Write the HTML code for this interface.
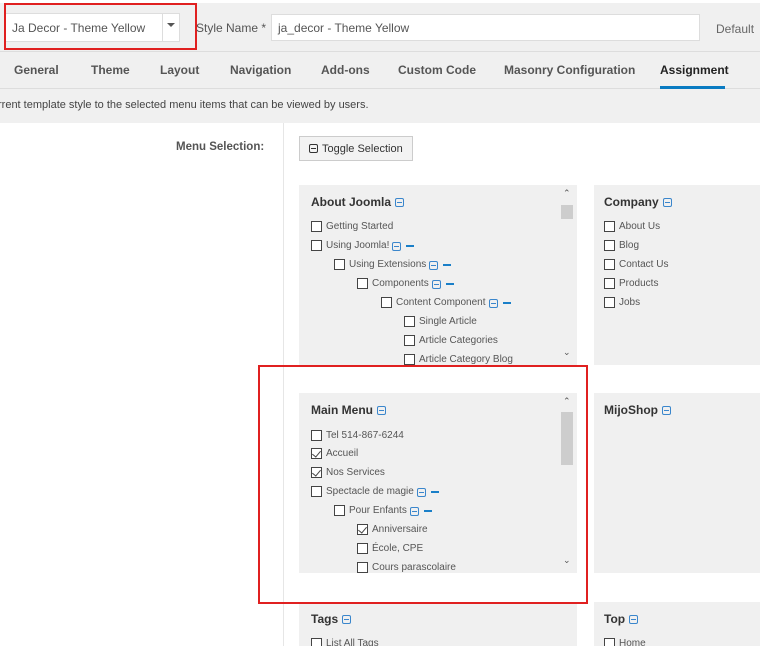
<!DOCTYPE html>
<html><head><meta charset="utf-8"><style>
*{margin:0;padding:0;box-sizing:border-box}
body{width:760px;height:646px;overflow:hidden;position:relative;background:#fff;font-family:"Liberation Sans",sans-serif;color:#333}
.a{position:absolute}
.hdr{left:0;top:3px;width:760px;height:120px;background:#f0f0f0}
.tab{position:absolute;top:63px;font-size:12px;font-weight:bold;color:#555}
.panel{position:absolute;background:#f0f0f0;overflow:hidden}
.h{position:absolute;font-size:12px;font-weight:bold;color:#333;left:12px}
.it{position:absolute;font-size:10px;color:#555;white-space:nowrap;height:12px;line-height:12px}
.cb{display:inline-block;width:11px;height:11px;border:1px solid #444;background:#fff;vertical-align:top;margin-right:4px;position:relative}
.cb.c::after{content:"";position:absolute;left:2px;top:0px;width:4px;height:7px;border:solid #444;border-width:0 1px 1px 0;transform:rotate(40deg)}
.ic{display:inline-block;width:9px;height:9px;border:1px solid #3a86cc;border-radius:2px;position:relative;vertical-align:top;margin:2px 0 0 3px}
.ic::after{content:"";position:absolute;left:1px;right:1px;top:3px;height:1px;background:#3a86cc}
.h .ic{margin-left:4px;margin-top:3px}
.ds{display:inline-block;width:8px;height:2px;background:#1a7fc8;vertical-align:top;margin:5px 0 0 5px}
.sb{position:absolute;right:0;top:0;width:19px;height:100%;background:#f0f0f0}
.sb .t{position:absolute;left:3px;width:12px;background:#cdcdcd}
.ar{position:absolute;left:5px;font-size:9px;color:#555}
</style></head><body>
<div class="a hdr"></div>
<div class="a" style="left:0;top:51px;width:760px;height:1px;background:#ddd"></div>
<div class="a" style="left:0;top:88px;width:760px;height:1px;background:#ddd"></div>
<div class="a" style="left:5px;top:13px;width:175px;height:29px;background:#fff;border:1px solid #ddd"></div>
<div class="a" style="left:162px;top:13px;width:1px;height:29px;background:#ddd"></div>
<div class="a" style="left:167px;top:23px;width:0;height:0;border-left:4px solid transparent;border-right:4px solid transparent;border-top:4px solid #555"></div>
<div class="a" style="left:12px;top:21px;font-size:12px;color:#555">Ja Decor - Theme Yellow</div>
<div class="a" style="left:4px;top:3px;width:193px;height:47px;border:2px solid #e02020"></div>
<div class="a" style="left:196px;top:21px;font-size:12px;color:#555">Style Name *</div>
<div class="a" style="left:271px;top:14px;width:429px;height:27px;background:#fff;border:1px solid #ddd"></div>
<div class="a" style="left:278px;top:21px;font-size:12px;color:#555">ja_decor - Theme Yellow</div>
<div class="a" style="left:716px;top:22px;font-size:12px;color:#666">Default</div>
<div class="tab" style="left:14px">General</div>
<div class="tab" style="left:91px">Theme</div>
<div class="tab" style="left:160px">Layout</div>
<div class="tab" style="left:230px">Navigation</div>
<div class="tab" style="left:321px">Add-ons</div>
<div class="tab" style="left:398px">Custom Code</div>
<div class="tab" style="left:504px">Masonry Configuration</div>
<div class="tab" style="left:660px;color:#222">Assignment</div>
<div class="a" style="left:660px;top:86px;width:65px;height:3px;background:#0a7bc2"></div>
<div class="a" style="left:-2px;top:99px;font-size:11px;color:#444;white-space:nowrap">rrent template style to the selected menu items that can be viewed by users.</div>
<div class="a" style="left:283px;top:123px;width:1px;height:523px;background:#e6e6e6"></div>
<div class="a" style="left:176px;top:141px;font-size:11.5px;font-weight:bold;color:#555">Menu Selection:</div>
<div class="a" style="left:299px;top:136px;width:114px;height:25px;background:#f3f3f3;border:1px solid #ccc;font-size:11px;color:#333;padding:6px 0 0 9px"><span class="ic k" style="border-color:#333;margin:1px 4px 0 0"></span>Toggle Selection</div>
<style>.ic.k::after{background:#333}</style>

<div class="panel" style="left:299px;top:185px;width:278px;height:180px">
 <div class="h" style="top:10px">About Joomla<span class="ic"></span></div>
 <div class="it" style="left:12px;top:36px"><span class="cb"></span>Getting Started</div>
 <div class="it" style="left:12px;top:55px"><span class="cb"></span>Using Joomla!<span class="ic"></span><span class="ds"></span></div>
 <div class="it" style="left:35px;top:74px"><span class="cb"></span>Using Extensions<span class="ic"></span><span class="ds"></span></div>
 <div class="it" style="left:58px;top:93px"><span class="cb"></span>Components<span class="ic"></span><span class="ds"></span></div>
 <div class="it" style="left:82px;top:112px"><span class="cb"></span>Content Component<span class="ic"></span><span class="ds"></span></div>
 <div class="it" style="left:105px;top:131px"><span class="cb"></span>Single Article</div>
 <div class="it" style="left:105px;top:150px"><span class="cb"></span>Article Categories</div>
 <div class="it" style="left:105px;top:169px"><span class="cb"></span>Article Category Blog</div>
 <div class="sb"><div class="ar" style="top:3px">&#8963;</div><div class="t" style="top:20px;height:14px"></div><div class="ar" style="top:162px">&#8964;</div></div>
</div>
<div class="panel" style="left:594px;top:185px;width:166px;height:180px">
 <div class="h" style="top:10px;left:10px">Company<span class="ic"></span></div>
 <div class="it" style="left:10px;top:36px"><span class="cb"></span>About Us</div>
 <div class="it" style="left:10px;top:55px"><span class="cb"></span>Blog</div>
 <div class="it" style="left:10px;top:74px"><span class="cb"></span>Contact Us</div>
 <div class="it" style="left:10px;top:93px"><span class="cb"></span>Products</div>
 <div class="it" style="left:10px;top:112px"><span class="cb"></span>Jobs</div>
</div>
<div class="panel" style="left:299px;top:393px;width:278px;height:180px">
 <div class="h" style="top:10px">Main Menu<span class="ic"></span></div>
 <div class="it" style="left:12px;top:37px"><span class="cb"></span>Tel 514-867-6244</div>
 <div class="it" style="left:12px;top:55px"><span class="cb c"></span>Accueil</div>
 <div class="it" style="left:12px;top:74px"><span class="cb c"></span>Nos Services</div>
 <div class="it" style="left:12px;top:93px"><span class="cb"></span>Spectacle de magie<span class="ic"></span><span class="ds"></span></div>
 <div class="it" style="left:35px;top:112px"><span class="cb"></span>Pour Enfants<span class="ic"></span><span class="ds"></span></div>
 <div class="it" style="left:58px;top:131px"><span class="cb c"></span>Anniversaire</div>
 <div class="it" style="left:58px;top:150px"><span class="cb"></span>École, CPE</div>
 <div class="it" style="left:58px;top:169px"><span class="cb"></span>Cours parascolaire</div>
 <div class="sb"><div class="ar" style="top:3px">&#8963;</div><div class="t" style="top:19px;height:53px"></div><div class="ar" style="top:162px">&#8964;</div></div>
</div>
<div class="panel" style="left:594px;top:393px;width:166px;height:180px">
 <div class="h" style="top:10px;left:10px">MijoShop<span class="ic"></span></div>
</div>
<div class="panel" style="left:299px;top:602px;width:278px;height:44px">
 <div class="h" style="top:10px">Tags<span class="ic"></span></div>
 <div class="it" style="left:12px;top:36px"><span class="cb"></span>List All Tags</div>
</div>
<div class="panel" style="left:594px;top:602px;width:166px;height:44px">
 <div class="h" style="top:10px;left:10px">Top<span class="ic"></span></div>
 <div class="it" style="left:10px;top:36px"><span class="cb"></span>Home</div>
</div>
<div class="a" style="left:258px;top:365px;width:330px;height:239px;border:2px solid #e02020"></div>
</body></html>
